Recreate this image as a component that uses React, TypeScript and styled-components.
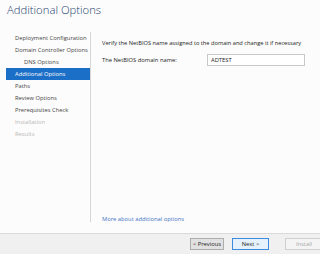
import styled, {createGlobalStyle} from 'styled-components';

const GlobalStyle = createGlobalStyle`
   html, body {
      margin: 0;
      padding: 0;
      background: #fcfcfc;
   }
   * {
      box-sizing: border-box;
   }
`;

const steps = [
   {label: 'Deployment Configuration'},
   {label: 'Domain Controller Options'},
   {label: 'DNS Options', sub: true},
   {label: 'Additional Options', active: true},
   {label: 'Paths'},
   {label: 'Review Options'},
   {label: 'Prerequisites Check'},
   {label: 'Installation', disabled: true},
   {label: 'Results', disabled: true},
];

export default function App() {
   return (
      <Window>
         <GlobalStyle />
         <Title>Additional Options</Title>
         <Body>
            {/* wizard steps */}
            <Sidebar>
               {steps.map((step, index) => (
                  <Step key={index} $active={step.active} $disabled={step.disabled} $sub={step.sub}>
                     {step.label}
                  </Step>
               ))}
            </Sidebar>
            <Content>
               <Intro>Verify the NetBIOS name assigned to the domain and change it if necessary</Intro>
               <FieldRow>
                  <FieldLabel>The NetBIOS domain name:</FieldLabel>
                  <Input defaultValue='ADTEST' />
               </FieldRow>
               <MoreLink>More about additional options</MoreLink>
            </Content>
         </Body>
         <Footer>
            <Button $width={34}>&lt; Previous</Button>
            <Button $width={37} $primary>Next &gt;</Button>
            <Button $width={38} $disabled>Install</Button>
         </Footer>
      </Window>
   );
}

const Window = styled.div`
   width: 320px;
   height: 254px;
   display: flex;
   flex-direction: column;
   overflow: hidden;
   font-family: 'Open Sans', 'Noto Sans', sans-serif;
   background: #fcfcfc;
`;

const Title = styled.div`
   height: 32px;
   padding: 2px 0 0 7px;
   font-size: 11.3px;
   font-weight: 300;
   color: #24426d;
`;

const Body = styled.div`
   flex: 1;
   display: flex;
   padding-bottom: 11px;
`;

const Sidebar = styled.div`
   width: 91px;
   padding: 0 0 0 6px;
   border-right: 1px solid #d6d6d6;
   display: flex;
   flex-direction: column;
`;

const Step = styled.div<{$active?: boolean; $disabled?: boolean; $sub?: boolean}>`
   height: 12px;
   line-height: 12px;
   padding-left: ${(p) => (p.$sub ? '18px' : '9px')};
   font-size: 5.8px;
   white-space: nowrap;
   color: ${(p) => (p.$active ? '#ffffff' : p.$disabled ? '#b8b8b8' : '#444444')};
   background: ${(p) => (p.$active ? '#1c6fc6' : 'transparent')};
`;

const Content = styled.div`
   flex: 1;
   display: flex;
   flex-direction: column;
   padding: 6px 0 0 11px;
`;

const Intro = styled.div`
   font-size: 5.7px;
   line-height: 10px;
   color: #222222;
   white-space: nowrap;
`;

const FieldRow = styled.div`
   display: flex;
   align-items: center;
   margin-top: 6px;
`;

const FieldLabel = styled.div`
   width: 105px;
   font-size: 5.8px;
   color: #222222;
   white-space: nowrap;
`;

const Input = styled.input`
   width: 98px;
   height: 12px;
   padding: 0 3px;
   border: 1px solid #c8c8c8;
   background: #ffffff;
   font-family: inherit;
   font-size: 5.8px;
   color: #222222;
   outline: none;
`;

const MoreLink = styled.a`
   margin-top: auto;
   margin-bottom: -1px;
   font-size: 5.8px;
   color: #3c73c4;
   cursor: pointer;
`;

const Footer = styled.div`
   height: 21px;
   border-top: 1px solid #dadada;
   background: #f0f0f0;
   display: flex;
   align-items: center;
   padding-left: 190px;
   gap: 8px;

   & > :last-child {
      margin-left: 8px;
   }
`;

const Button = styled.button<{$width: number; $primary?: boolean; $disabled?: boolean}>`
   flex-shrink: 0;
   width: ${(p) => p.$width}px;
   height: 12px;
   padding: 0;
   font-family: inherit;
   font-size: 5.8px;
   line-height: 10px;
   color: ${(p) => (p.$disabled ? '#a8a8a8' : '#222222')};
   background: ${(p) => (p.$primary ? '#e5f1fb' : p.$disabled ? '#f4f4f4' : '#e1e1e1')};
   border: 1px solid ${(p) => (p.$primary ? '#3c8be0' : p.$disabled ? '#cfcfcf' : '#adadad')};
`;
